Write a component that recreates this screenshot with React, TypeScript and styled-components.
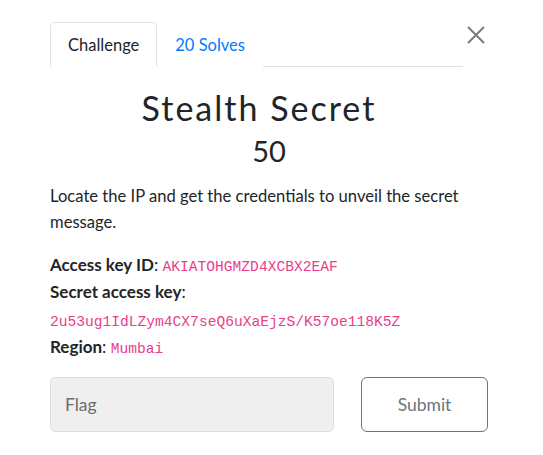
import React from "react";
import styled, { createGlobalStyle } from "styled-components";

const Global = createGlobalStyle`
  html, body { margin: 0; padding: 0; background: #fff; }
  body { font-family: Lato, "Noto Sans", sans-serif; color: #212529; }
`;

const Screen = styled.div`
  display: flex;
  width: 543px;
  height: 455px;
  overflow: hidden;
`;

const Modal = styled.div`
  flex: 1;
  background: #fff;
  padding: 22px 55px 0 50px;
  box-sizing: border-box;
`;

const Edge = styled.div`
  width: 1px;
  background: linear-gradient(#000 0, #111 20px, #555 40px, #555 100%);
`;

const Header = styled.div`
  display: flex;
  align-items: flex-start;
`;

const TabList = styled.div`
  display: flex;
  width: 413px;
  border-bottom: 1px solid #dee2e6;
`;

const Tab = styled.div<{ $active?: boolean }>`
  height: 43px;
  padding: 0 17px;
  display: flex;
  align-items: center;
  font-size: 16.5px;
  color: ${(p) => (p.$active ? "#212529" : "#007bff")};
  border: 1px solid ${(p) => (p.$active ? "#dee2e6" : "transparent")};
  border-bottom-color: ${(p) => (p.$active ? "#fff" : "transparent")};
  border-radius: 5px 5px 0 0;
  margin-bottom: -1px;
  background: #fff;
`;

const Close = styled.button`
  margin: 4px 0 0 4px;
  width: 18px;
  height: 18px;
  padding: 0;
  border: 0;
  background: none;
  display: flex;
`;

const Title = styled.h2`
  margin: 20px 0 0;
  padding-right: 20px;
  text-align: center;
  font-size: 34px;
  font-weight: 400;
  letter-spacing: 2px;
  line-height: 42px;
`;

const Points = styled.h3`
  margin: 4px 0 0;
  text-align: center;
  font-size: 29px;
  font-weight: 400;
  line-height: 36px;
`;

const Description = styled.div`
  margin-top: 14px;
  font-size: 16.6px;
  line-height: 26px;
  width: 438px;
`;

const Para = styled.p`
  margin: 0 0 16px;
`;

const Line = styled.div`
  font-size: 17px;
  line-height: 27.3px;
`;

const Label = styled.strong`
  font-weight: 700;
`;

const Code = styled.code`
  font-family: "Liberation Mono", monospace;
  font-size: 14.6px;
  line-height: 1;
  color: #e83e8c;
`;

const Form = styled.div`
  display: flex;
  gap: 27px;
  margin-top: 17px;
  width: 438px;
`;

const Input = styled.input`
  flex: 0 0 284px;
  height: 55px;
  box-sizing: border-box;
  border: 1px solid #dddddd;
  border-radius: 5px;
  background: #efefef;
  padding: 0 14px;
  font-family: Lato, sans-serif;
  font-size: 17.5px;
  color: #495057;
  &::placeholder { color: #6c6c6c; }
  outline: none;
`;

const Submit = styled.button`
  flex: 0 0 127px;
  height: 55px;
  box-sizing: border-box;
  border: 1px solid #6c757d;
  border-radius: 6px;
  background: #fff;
  color: #6c757d;
  font-family: Lato, sans-serif;
  font-size: 17.5px;
`;

export default function App() {
  return (
    <>
      <Global />
      <Screen>
        <Modal>
          <Header>
            <TabList>
              <Tab $active>Challenge</Tab>
              <Tab>20 Solves</Tab>
            </TabList>
            <Close aria-label="Close">
              <svg width="18" height="18" viewBox="0 0 18 18">
                <path d="M1 1 L17 17 M17 1 L1 17" stroke="#7a7a7a" strokeWidth="2" />
              </svg>
            </Close>
          </Header>
          <Title>Stealth Secret</Title>
          <Points>50</Points>
          <Description>
            <Para>Locate the IP and get the credentials to unveil the secret message.</Para>
            <Line>
              <Label>Access key ID</Label>: <Code>AKIATOHGMZD4XCBX2EAF</Code>
            </Line>
            <Line>
              <Label>Secret access key</Label>:
            </Line>
            <Line>
              <Code>2u53ug1IdLZym4CX7seQ6uXaEjzS/K57oe118K5Z</Code>
            </Line>
            <Line>
              <Label>Region</Label>: <Code>Mumbai</Code>
            </Line>
          </Description>
          <Form>
            <Input placeholder="Flag" />
            <Submit>Submit</Submit>
          </Form>
        </Modal>
        <Edge />
      </Screen>
    </>
  );
}
